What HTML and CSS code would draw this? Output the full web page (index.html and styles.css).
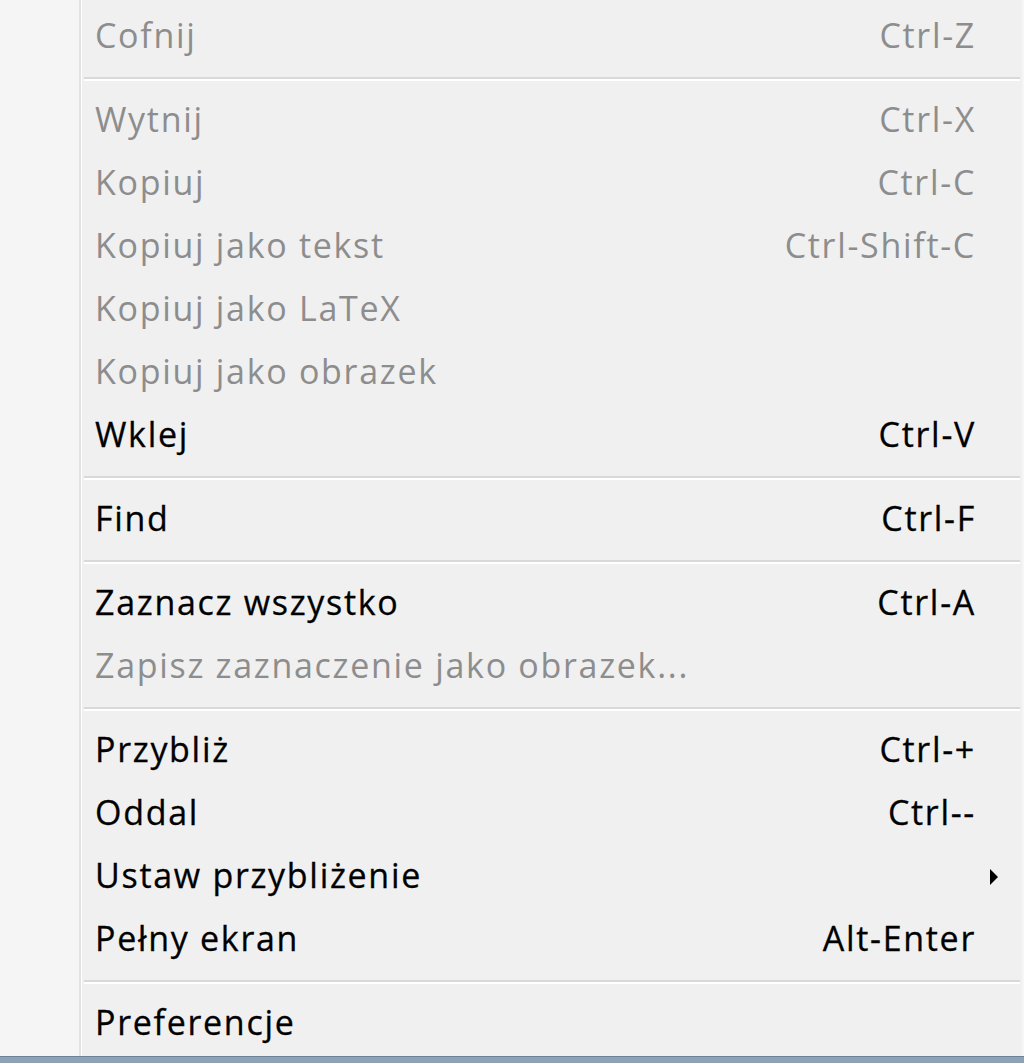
FILE: index.html
```html
<!DOCTYPE html>
<html>
<head>
  <title>Menu</title>
  <link rel="stylesheet" href="styles.css">
</head>
<body>
  <div class="menu">
    <div class="gutter"></div>
    <div class="items">
      <div class="item disabled"><span>Cofnij</span><span class="key">Ctrl-Z</span></div>
      <div class="sep"></div>
      <div class="item disabled"><span>Wytnij</span><span class="key">Ctrl-X</span></div>
      <div class="item disabled"><span>Kopiuj</span><span class="key">Ctrl-C</span></div>
      <div class="item disabled"><span>Kopiuj jako tekst</span><span class="key">Ctrl-Shift-C</span></div>
      <div class="item disabled"><span>Kopiuj jako LaTeX</span></div>
      <div class="item disabled"><span>Kopiuj jako obrazek</span></div>
      <div class="item"><span>Wklej</span><span class="key">Ctrl-V</span></div>
      <div class="sep"></div>
      <div class="item"><span>Find</span><span class="key">Ctrl-F</span></div>
      <div class="sep"></div>
      <div class="item"><span>Zaznacz wszystko</span><span class="key">Ctrl-A</span></div>
      <div class="item disabled"><span>Zapisz zaznaczenie jako obrazek...</span></div>
      <div class="sep"></div>
      <div class="item"><span>Przybliż</span><span class="key">Ctrl-+</span></div>
      <div class="item"><span>Oddal</span><span class="key">Ctrl--</span></div>
      <div class="item"><span>Ustaw przybliżenie</span><span class="arrow"></span></div>
      <div class="item"><span>Pełny ekran</span><span class="key">Alt-Enter</span></div>
      <div class="sep"></div>
      <div class="item"><span>Preferencje</span></div>
    </div>
  </div>
  <div class="behind"></div>
</body>
</html>
```

FILE: styles.css
```css
body {
  margin: 0;
  background-color: #f0f0f0;
  font-family: "Open Sans", "Noto Sans", sans-serif;
  overflow: hidden;
}

.menu {
  display: flex;
  height: 1056px;
}

.gutter {
  width: 79px;
  background-color: #f5f5f5;
  border-right: 2px solid #e2e2e2;
  box-shadow: 1px 0 0 #ffffff;
}

.items {
  flex: 1;
  padding: 6px 47px 0 14px;
  border-right: 2px solid #f6f6f6;
}

.item {
  box-sizing: border-box;
  height: 63px;
  padding-bottom: 5px;
  display: flex;
  justify-content: space-between;
  align-items: center;
  font-size: 34px;
  letter-spacing: 1.7px;
  color: #000000;
  -webkit-text-stroke: 0.3px currentColor;
}

.item.disabled {
  color: #8d8d8d;
  -webkit-text-stroke: 0;
}

.key {
  margin-right: -1px;
}

.sep {
  height: 21px;
  margin-left: -11px;
  margin-right: -45px;
  position: relative;
}

.sep::after {
  content: "";
  position: absolute;
  left: 0;
  right: 0;
  top: 8px;
  border-top: 2px solid #d9d9d9;
  border-bottom: 2px solid #ffffff;
}

.arrow {
  width: 0;
  height: 0;
  border-top: 8px solid transparent;
  border-bottom: 8px solid transparent;
  border-left: 8px solid #000000;
  margin-right: -23px;
  margin-top: 3px;
}

.behind {
  height: 7px;
  background-color: #8ea2b6;
  border-top: 1px solid #6d8196;
}
```
